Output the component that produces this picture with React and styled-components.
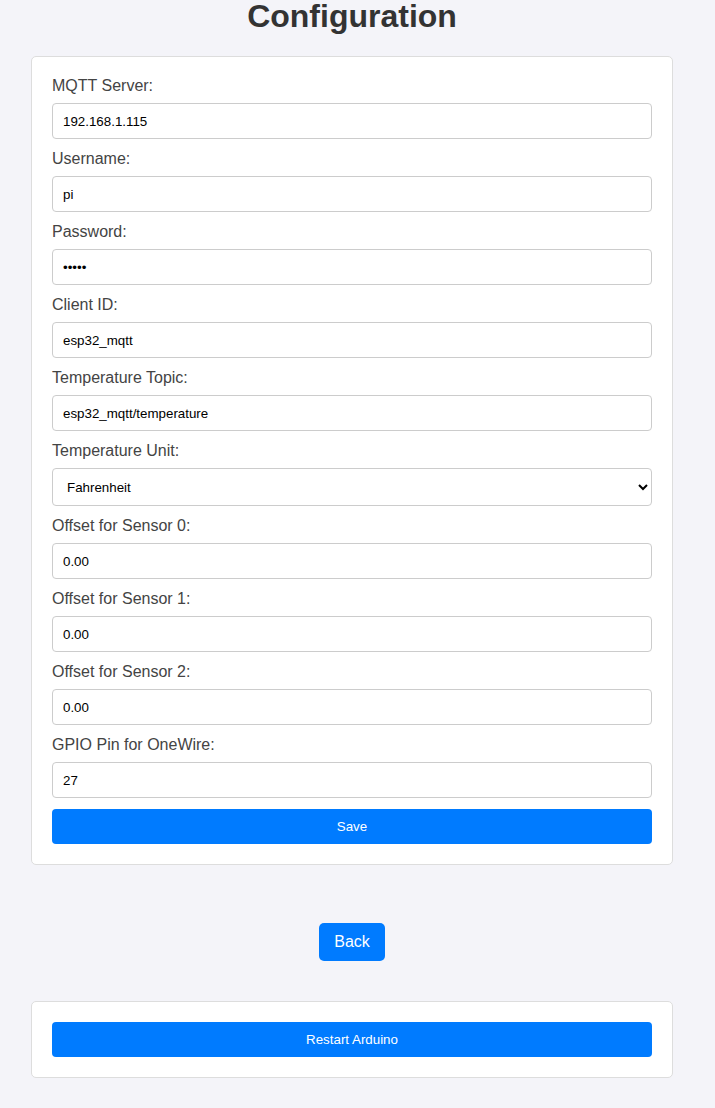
import React from "react";
import styled, { createGlobalStyle } from "styled-components";

const GlobalStyle = createGlobalStyle`
  html, body {
    margin: 0;
    padding: 0;
    background: #f4f4f9;
  }
  body {
    font-family: "Liberation Sans", Arial, sans-serif;
    color: #333;
  }
  * { box-sizing: border-box; }
`;

const Page = styled.div`
  width: 704px;
  padding-bottom: 30px;
`;

const Title = styled.h1`
  margin: -2px 0 21px;
  font-size: 32px;
  line-height: 37px;
  font-weight: bold;
  text-align: center;
  color: #333;
`;

const Card = styled.div`
  width: 642px;
  margin: 0 auto;
  background: #fff;
  border: 1px solid #ddd;
  border-radius: 5px;
  padding: ${(p) => (p.$compact ? "20px" : "19px 20px 20px")};
`;

const Form = styled.form`
  display: flex;
  flex-direction: column;
  margin: 0;
`;

const Label = styled.label`
  display: block;
  font-size: 16px;
  line-height: 20px;
  color: #444;
  margin-bottom: 7px;
`;

const Input = styled.input`
  display: block;
  width: 100%;
  height: 36px;
  padding: 0 10px;
  margin: 0 0 10px;
  border: 1px solid #ccc;
  border-radius: 4px;
  background: #fff;
  font-family: "Liberation Sans", Arial, sans-serif;
  font-size: 13.333px;
  color: #000;
  outline: none;
`;

const Select = styled.select`
  display: block;
  width: 100%;
  height: 38px;
  padding: 0 6px 0 10px;
  margin: 0 0 10px;
  border: 1px solid #ccc;
  border-radius: 4px;
  background: #fff;
  font-family: "Liberation Sans", Arial, sans-serif;
  font-size: 13.333px;
  color: #000;
  outline: none;
`;

const WideButton = styled.button`
  display: block;
  width: 100%;
  height: 35px;
  border: none;
  border-radius: 4px;
  background: #007bff;
  color: #fff;
  font-family: "Liberation Sans", Arial, sans-serif;
  font-size: 13.333px;
  cursor: pointer;
  margin-top: ${(p) => p.$offset || 0}px;
`;

const NavRow = styled.div`
  display: flex;
  justify-content: center;
  margin: 58px 0 40px;
`;

const BackLink = styled.a`
  display: inline-block;
  padding: 0 15px;
  height: 38px;
  line-height: 38px;
  background: #007bff;
  color: #fff;
  font-size: 16px;
  border-radius: 5px;
  text-decoration: none;
`;

const fields = [
  { id: "server", label: "MQTT Server:", value: "192.168.1.115" },
  { id: "user", label: "Username:", value: "pi" },
  { id: "pass", label: "Password:", value: "raspi", type: "password" },
  { id: "client", label: "Client ID:", value: "esp32_mqtt" },
  { id: "topic", label: "Temperature Topic:", value: "esp32_mqtt/temperature" },
  { id: "unit", label: "Temperature Unit:", select: true },
  { id: "off0", label: "Offset for Sensor 0:", value: "0.00" },
  { id: "off1", label: "Offset for Sensor 1:", value: "0.00" },
  { id: "off2", label: "Offset for Sensor 2:", value: "0.00" },
  { id: "gpio", label: "GPIO Pin for OneWire:", value: "27" },
];

export default function App() {
  return (
    <Page>
      <GlobalStyle />
      <Title>Configuration</Title>
      <Card>
        <Form onSubmit={(e) => e.preventDefault()}>
          {fields.map((f) => (
            <React.Fragment key={f.id}>
              <Label htmlFor={f.id}>{f.label}</Label>
              {f.select ? (
                <Select id={f.id} defaultValue="F">
                  <option value="C">Celsius</option>
                  <option value="F">Fahrenheit</option>
                </Select>
              ) : (
                <Input id={f.id} type={f.type || "text"} defaultValue={f.value} />
              )}
            </React.Fragment>
          ))}
          <WideButton type="submit" $offset={1}>Save</WideButton>
        </Form>
      </Card>
      <NavRow>
        <BackLink href="#">Back</BackLink>
      </NavRow>
      <Card $compact>
        <WideButton type="button">Restart Arduino</WideButton>
      </Card>
    </Page>
  );
}
